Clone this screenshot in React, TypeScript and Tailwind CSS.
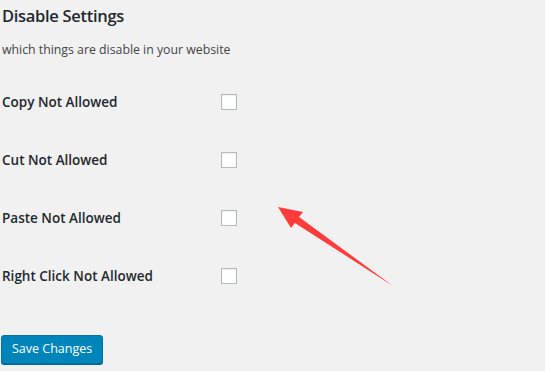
import { useState } from 'react';

const options = ['Copy Not Allowed', 'Cut Not Allowed', 'Paste Not Allowed', 'Right Click Not Allowed'];

export default function App() {
  const [checked, setChecked] = useState<boolean[]>([false, false, false, false]);

  return (
    <div
      className="relative w-[545px] h-[371px] bg-[#f1f1f1] text-[#23282d] overflow-hidden"
      style={{ fontFamily: "'Open Sans', 'Noto Sans', sans-serif" }}
    >
      <div className="pl-[2px]">
        <h2 className="h-8 flex items-center text-[16.5px] tracking-[-0.3px] font-semibold">Disable Settings</h2>
        <p className="mt-2 h-5 flex items-center text-[12.3px] text-[#444]">which things are disable in your website</p>

        {/* Options */}
        <div className="mt-[13px]">
          {options.map((label, i) => (
            <div key={label} className="h-[58px] flex items-center">
              <span className="w-[219px] text-[13.5px] font-semibold">{label}</span>
              <button
                type="button"
                onClick={() => setChecked(checked.map((c, j) => (j === i ? !c : c)))}
                className="w-4 h-4 bg-white border border-[#b4b9be] shadow-[inset_0_1px_2px_rgba(0,0,0,0.07)]"
              />
            </div>
          ))}
        </div>

        <button
          type="button"
          className="mt-[30px] -ml-[1px] h-[29px] px-[10px] rounded-[3px] bg-[#0085ba] border border-[#0073aa] text-white text-[12.5px] shadow-[0_1px_0_#006799]"
        >
          Save Changes
        </button>
      </div>

      {/* Annotation arrow */}
      <svg className="absolute left-0 top-0 pointer-events-none" width="545" height="371">
        <polygon points="278,207 303,212 299,217 393,286 295,223 291,228" fill="#ff3b3b" />
      </svg>
    </div>
  );
}
